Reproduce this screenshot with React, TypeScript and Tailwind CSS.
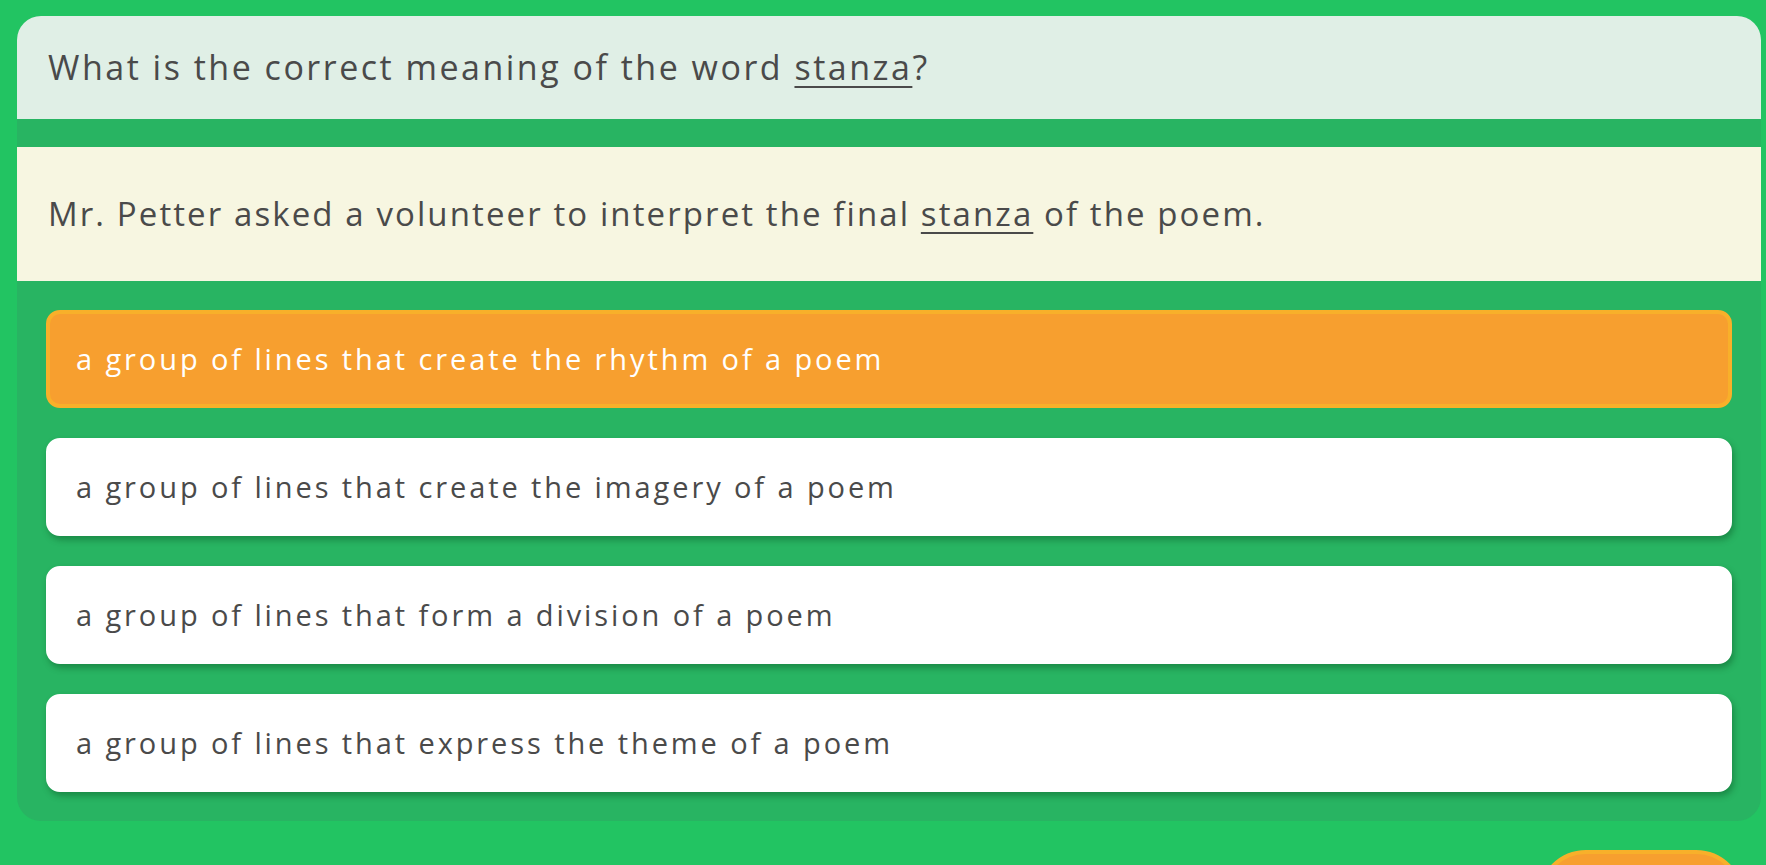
const options = [
  "a group of lines that create the rhythm of a poem",
  "a group of lines that create the imagery of a poem",
  "a group of lines that form a division of a poem",
  "a group of lines that express the theme of a poem",
]

export default function App() {
  const selected = 0

  return (
    <div className="min-h-screen bg-[#22c462] pt-4 pl-[17px] pb-10 font-['Open_Sans',sans-serif] text-[#4a4a4a]">
      <div className="w-[1744px] rounded-[24px] bg-[#28b462] overflow-hidden">
        <div className="h-[103px] bg-[#e0efe6] pl-[31px] flex items-center">
          <h2 className="text-[34px] font-medium tracking-[2.5px]">
            What is the correct meaning of the word{" "}
            <span className="underline underline-offset-[6px] decoration-2">stanza</span>?
          </h2>
        </div>

        <div className="mt-[28px] h-[134px] bg-[#f7f6e1] pl-[31px] flex items-center">
          <p className="text-[33px] tracking-[2.1px]">
            Mr. Petter asked a volunteer to interpret the final{" "}
            <span className="underline underline-offset-[6px] decoration-2">stanza</span> of the poem.
          </p>
        </div>

        <div className="p-[29px] flex flex-col gap-[30px]">
          {options.map((opt, i) => (
            <button
              key={opt}
              className={`h-[98px] rounded-[14px] pl-[26px] text-left text-[29px] font-medium tracking-[2.9px] ${
                i === selected
                  ? "bg-[#f79f2f] border-[4px] border-[#f8b02a] text-white"
                  : "bg-white border-[4px] border-white text-[#4a4a4a] shadow-[2px_4px_6px_rgba(0,60,20,0.35)]"
              }`}
            >
              {opt}
            </button>
          ))}
        </div>
      </div>

      <div className="flex justify-end w-[1744px] pr-[17px] mt-[29px]">
        <button className="w-[206px] h-[96px] rounded-full bg-[#f79f2f] border-[4px] border-[#f8b02a] text-white text-[24px] font-semibold">
          Next
        </button>
      </div>
    </div>
  )
}
